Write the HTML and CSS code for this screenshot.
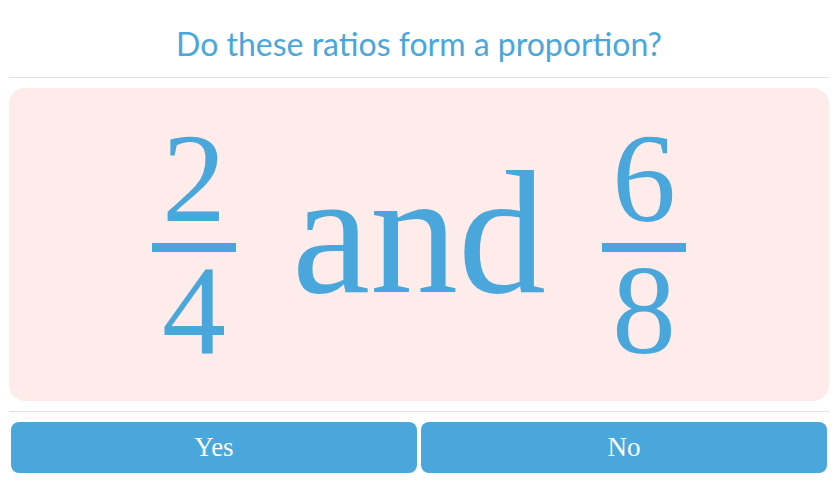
FILE: index.html
```html
<!DOCTYPE html>
<html lang="en">
<head>
  <meta charset="UTF-8">
  <title>Proportions</title>
  <link rel="stylesheet" href="styles.css">
</head>
<body>
  <div class="quiz">
    <h1 class="question">Do these ratios form a proportion?</h1>
    <hr>
    <div class="problem">
      <div class="frac">
        <span class="num">2</span>
        <span class="bar"></span>
        <span class="den">4</span>
      </div>
      <span class="word">and</span>
      <div class="frac">
        <span class="num">6</span>
        <span class="bar"></span>
        <span class="den">8</span>
      </div>
    </div>
    <hr>
    <div class="answers">
      <button class="answer">Yes</button>
      <button class="answer">No</button>
    </div>
  </div>
</body>
</html>
```

FILE: styles.css
```css
body {
  margin: 0;
  padding: 0;
  background: #fff;
}

.quiz {
  width: 820px;
  margin-left: 9px;
}

.question {
  margin: 0;
  height: 77px;
  padding-top: 24px;
  box-sizing: border-box;
  font-family: Lato, sans-serif;
  font-weight: normal;
  font-size: 32px;
  line-height: 40px;
  color: #4aa7db;
  text-align: center;
}

hr {
  margin: 0;
  border: none;
  border-top: 1px solid #e2e2e6;
}

.problem {
  margin: 10px 0;
  height: 313px;
  background: #fdecea;
  border-radius: 16px;
  display: flex;
  justify-content: center;
  align-items: center;
  font-family: "Liberation Serif", "Times New Roman", serif;
  color: #4aa7db;
}

.frac {
  display: flex;
  flex-direction: column;
  align-items: center;
  width: 84px;
}

.num, .den {
  font-size: 128px;
  line-height: 0.9;
}

.bar {
  width: 100%;
  height: 9px;
  margin: 7px 0 1px;
  background: #4aa7db;
}

.word {
  font-size: 176px;
  line-height: 1;
  margin: 0 56px 24px;
}

.answers {
  display: flex;
  gap: 4px;
  padding: 10px 2px 0;
}

.answer {
  flex: 1;
  height: 51px;
  border: none;
  border-radius: 8px;
  background: #4aa7db;
  color: #fff;
  font-family: "Liberation Serif", "Times New Roman", serif;
  font-size: 27px;
  cursor: pointer;
}
```
